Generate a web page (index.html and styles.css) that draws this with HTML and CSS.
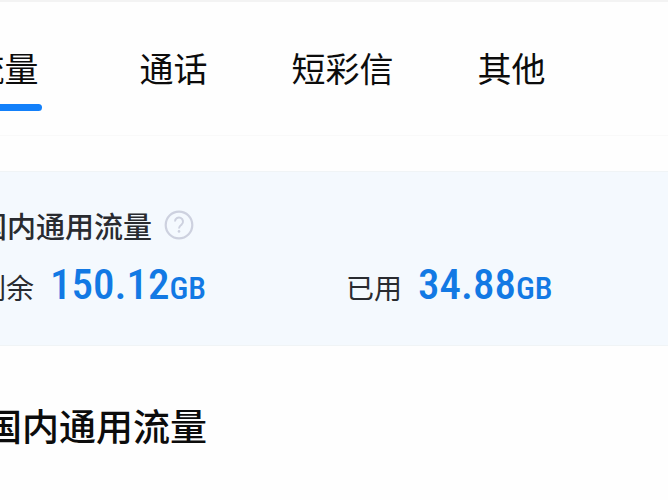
FILE: index.html
```html
<!DOCTYPE html>
<html lang="zh-CN">
<head>
  <meta charset="UTF-8">
  <meta name="viewport" content="width=device-width, initial-scale=1.0">
  <link rel="stylesheet" href="styles.css">
  <title>流量查询</title>
</head>
<body>

<div class="page">
  <nav class="tabs">
    <button class="tab active">流量</button>
    <button class="tab">通话</button>
    <button class="tab">短彩信</button>
    <button class="tab">其他</button>
  </nav>

  <section class="summary">
    <div class="summary-title">
      <span>国内通用流量</span>
      <button class="help" aria-label="说明">
        <svg width="30" height="30" viewBox="0 0 30 30" fill="none" stroke="#cdd1df">
          <circle cx="15" cy="15" r="13.3" stroke-width="2.2"/>
          <path d="M11 11.6a4 4 0 1 1 6.6 3c-1.5 1.2-2.6 1.8-2.6 3.8" stroke-width="2"/>
          <circle cx="15" cy="21.4" r="1.3" fill="#cdd1df" stroke="none"/>
        </svg>
      </button>
    </div>
    <div class="amounts">
      <div class="amount">
        <span class="label">剩余</span>
        <span class="number">150.12<span class="unit">GB</span></span>
      </div>
      <div class="amount">
        <span class="label">已用</span>
        <span class="number">34.88<span class="unit">GB</span></span>
      </div>
    </div>
  </section>

  <h2 class="heading">国内通用流量</h2>
</div>

</body>
</html>
```
FILE: styles.css
```css
body {
  margin: 0;
  overflow: hidden;
  background: #fefefe;
  color: #0c0c0c;
  font-family: "Noto Sans CJK SC", sans-serif;
}

button {
  padding: 0;
  border: none;
  background: none;
  color: inherit;
  font-family: inherit;
  cursor: pointer;
}

/* wider than the window, the list is scrolled a bit to the right */
.page {
  margin: 0 -46px 0 -80px;
  border-top: 2px solid #f3f3f3;
}

.tabs {
  display: flex;
  padding: 41px 118px 24px 0;
  border-bottom: 1px solid #f9f9f9;
}

.tab {
  display: flex;
  flex: 1;
  flex-direction: column;
  align-items: center;
  gap: 11px;
  font-size: 34px;
  line-height: 50px;
}

.tab::after {
  content: "";
  width: 74px;
  height: 7px;
  border-radius: 4px;
}

.active::after {
  background: #1380fa;
}

.summary {
  margin-top: 35px;
  padding: 33px 0 29px 58px;
  border-top: 1px solid #f0f4f6;
  border-bottom: 1px solid #f0f4f6;
  background: #f4f9fe;
  color: #292b30;
}

.summary-title {
  display: flex;
  align-items: center;
  gap: 12px;
  font-size: 29px;
  font-weight: 500;
  line-height: 40px;
}

.help {
  display: flex;
}

.amounts {
  display: grid;
  grid-template-columns: 1fr 1fr;
  margin-top: 11px;
}

.amount {
  display: flex;
  align-items: baseline;
  gap: 16px;
  line-height: 56px;
}

.label {
  font-size: 28px;
}

.number {
  color: #1279e4;
  font-family: "Roboto Condensed", Roboto, sans-serif;
  font-size: 43px;
  font-weight: 500;
}

.unit {
  font-size: 32px;
}

.heading {
  margin: 52px 0 0 65px;
  font-size: 37px;
  font-weight: 500;
  line-height: 54px;
}
```
